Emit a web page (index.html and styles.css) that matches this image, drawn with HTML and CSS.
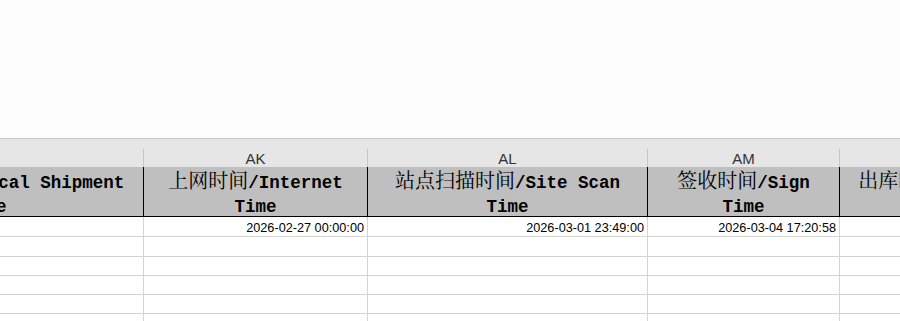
FILE: index.html
```html
<!DOCTYPE html>
<html lang="zh-CN">
<head>
<meta charset="utf-8">
<title>Sheet</title>
<link rel="stylesheet" href="styles.css">
</head>
<body>
<div class="blank"></div>
<div class="sheet">
  <div class="col-letter"><span class="letter-inner">AJ</span></div>
  <div class="col-letter"><span class="letter-inner">AK</span></div>
  <div class="col-letter"><span class="letter-inner">AL</span></div>
  <div class="col-letter"><span class="letter-inner">AM</span></div>
  <div class="col-letter"><span class="letter-inner">AN</span></div>

  <div class="head head-first"><div class="hl"><span class="cjk">本地发货时间</span>/Local Shipment</div><div class="hl">Time</div></div>
  <div class="head"><div class="hl"><span class="cjk">上网时间</span>/Internet</div><div class="hl">Time</div></div>
  <div class="head"><div class="hl"><span class="cjk">站点扫描时间</span>/Site Scan</div><div class="hl">Time</div></div>
  <div class="head"><div class="hl"><span class="cjk">签收时间</span>/Sign</div><div class="hl">Time</div></div>
  <div class="head"><div class="hl"><span class="cjk">出库时间</span>/Outbound</div><div class="hl">Time</div></div>

  <div class="cell"></div>
  <div class="cell">2026-02-27 00:00:00</div>
  <div class="cell">2026-03-01 23:49:00</div>
  <div class="cell">2026-03-04 17:20:58</div>
  <div class="cell"></div>

  <div class="cell"></div><div class="cell"></div><div class="cell"></div><div class="cell"></div><div class="cell"></div>
  <div class="cell"></div><div class="cell"></div><div class="cell"></div><div class="cell"></div><div class="cell"></div>
  <div class="cell"></div><div class="cell"></div><div class="cell"></div><div class="cell"></div><div class="cell"></div>
  <div class="cell"></div><div class="cell"></div><div class="cell"></div><div class="cell"></div><div class="cell"></div>
  <div class="cell"></div><div class="cell"></div><div class="cell"></div><div class="cell"></div><div class="cell"></div>
</div>
</body>
</html>
```

FILE: styles.css
```css
html, body {
  margin: 0;
  padding: 0;
  width: 900px;
  height: 321px;
  overflow: hidden;
  background: #fdfdfd;
}

.blank {
  height: 138px;
  border-bottom: 1px solid #c8c8c8;
}

.sheet {
  margin-left: -165px;
  display: grid;
  grid-template-columns: 309px 224px 280px 192px 212px;
  grid-template-rows: 28px 50px 20px 20px 19px 19px 19px 19px;
  background: #ffffff;
}

.col-letter {
  background: #e6e6e6;
  display: flex;
  align-items: flex-end;
}

.letter-inner {
  flex: 1;
  height: 18px;
  padding-top: 1px;
  box-sizing: border-box;
  border-right: 1px solid #c6c6c6;
  text-align: center;
  font-family: "Liberation Sans", Arial, sans-serif;
  font-size: 15px;
  line-height: 17px;
  color: #333333;
  overflow: hidden;
}

.head {
  background: #bfbfbf;
  border-right: 1px solid #000000;
  border-bottom: 1px solid #000000;
  padding-top: 4px;
  box-sizing: border-box;
  text-align: center;
  font-family: "Liberation Mono", "Courier New", monospace;
  font-weight: bold;
  font-size: 17.5px;
  color: #000000;
  overflow: hidden;
}

.head-first {
  padding-right: 7px;
}

.hl {
  height: 24px;
  line-height: 24px;
  white-space: nowrap;
}

.cjk {
  font-family: "Noto Serif CJK SC", "Noto Sans CJK SC", serif;
  font-weight: 400;
  font-size: 20px;
  line-height: 0;
}

.cell {
  border-right: 1px solid #d4d4d4;
  border-bottom: 1px solid #d4d4d4;
  box-sizing: border-box;
  padding: 2px 3px 0 0;
  text-align: right;
  font-family: "Liberation Sans", Arial, sans-serif;
  font-size: 12.7px;
  line-height: 19px;
  color: #000000;
  white-space: nowrap;
  overflow: hidden;
}
```
